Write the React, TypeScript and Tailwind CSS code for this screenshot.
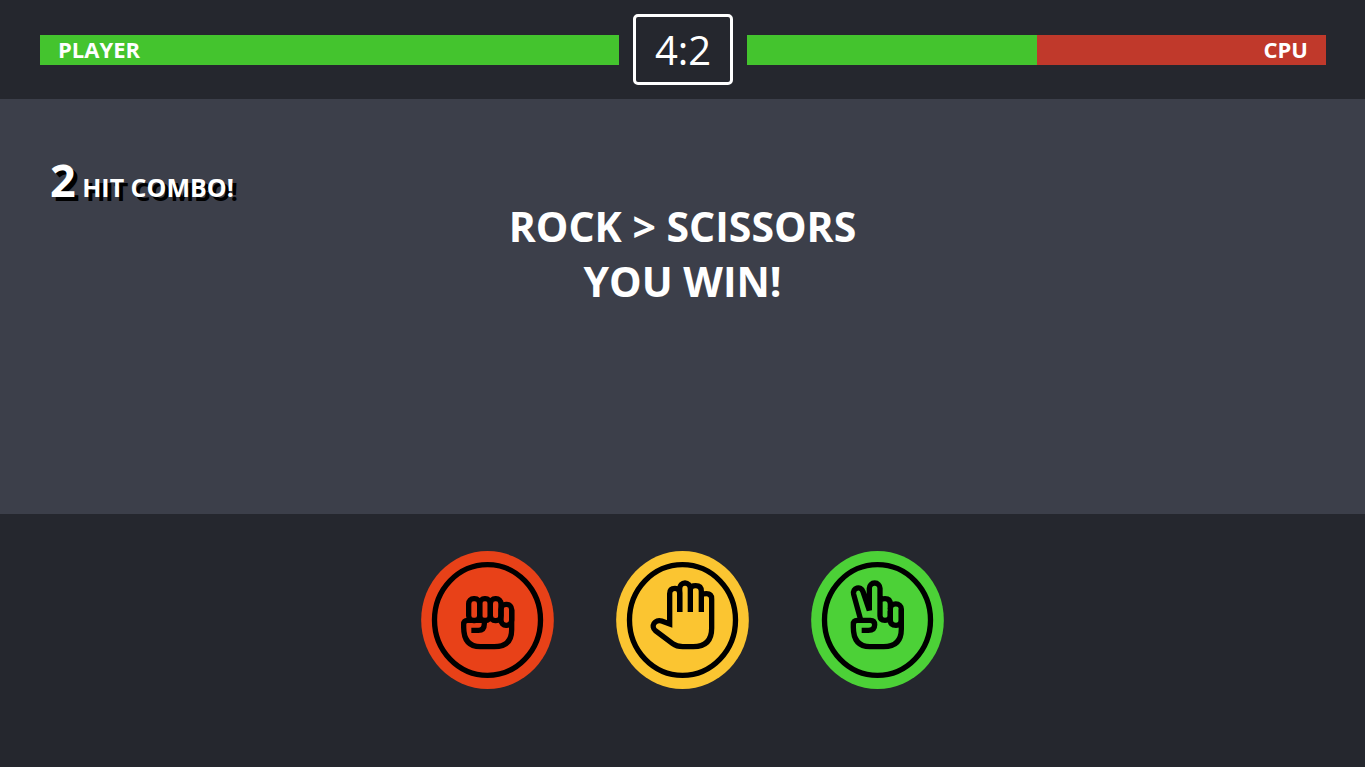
import type { ReactNode } from 'react';

type Move = { name: string; fill: string; icon: ReactNode };

const moves: Move[] = [
  {
    name: 'Rock',
    fill: 'fill-[#e84118]',
    icon: (
      <>
        <rect x="143" y="143" width="33" height="66" rx="15" />
        <rect x="176" y="143" width="32" height="66" rx="15" />
        <rect x="208" y="143" width="32" height="66" rx="15" />
        <rect x="240" y="160" width="32" height="63" rx="15" />
        <path d="M272 176V236q0 51-52 51H178q-50 0-50-58V220q0-12 12-12H190V218q0 20-18 20H151" />
      </>
    ),
  },
  {
    name: 'Paper',
    fill: 'fill-[#fbc531]',
    icon: (
      <>
        <path d="M191 183V126q0-14-14-14q-16 0-16 16V219L137 210c-20-7-35 16-18 30L170 278q12 9 30 9H232q55 0 55-55V144q0-16-16-16q-12 0-14 6" />
        <path d="M191 183V113a16 17 0 0 1 32 0V183M223 114q2-10 16-10q17 0 17 17V183" />
      </>
    ),
  },
  {
    name: 'Scissors',
    fill: 'fill-[#4cd137]',
    icon: (
      <>
        <path d="M148 203L128 130c-5-20 22-27 28-8L175 178V112a16 16 0 0 1 32 0V195q0 13 15 13q16 0 16-13V160q0-17-16-17q-10 0-15 6" />
        <path d="M238 174a16 15 0 0 1 33 0V207q0 16-16 16q-17 0-17-16V180" />
        <path d="M271 175V234q0 53-53 53H177q-50 0-50-58V220q0-12 12-12H178q13 0 13 13q0 17-19 17H152" />
      </>
    ),
  },
];

function MoveButton({ move }: { move: Move }) {
  return (
    <button type="button" aria-label={move.name} className="cursor-pointer rounded-full">
      <svg viewBox="0 0 399 414" className="h-[138px] w-[133px]" aria-hidden="true">
        <ellipse cx="199.5" cy="207" rx="199" ry="207" className={move.fill} />
        <g fill="none" stroke="#000" strokeWidth="16">
          <ellipse cx="199.5" cy="207" rx="159" ry="166" />
          {move.icon}
        </g>
      </svg>
    </button>
  );
}

function HealthBar({ label, health, alignEnd }: { label: string; health: number; alignEnd?: boolean }) {
  return (
    <div
      role="meter"
      aria-label={label}
      aria-valuenow={health}
      aria-valuemin={0}
      aria-valuemax={100}
      className="relative h-[30px] flex-1 bg-[#c0392b]"
    >
      <div className="h-full bg-[#44c42e]" style={{ width: `${health}%` }} />
      <span
        className={`absolute inset-0 flex items-center px-[18px] text-[22px] font-bold ${
          alignEnd ? 'justify-end' : 'justify-start'
        }`}
      >
        {label}
      </span>
    </div>
  );
}

export default function App() {
  return (
    <div className="flex min-h-screen flex-col bg-[#25272e] font-['Open_Sans',sans-serif] text-white">
      <header className="flex items-center gap-3.5 py-3.5 pr-[39px] pl-10">
        <HealthBar label="PLAYER" health={100} />
        <div className="rounded-[5px] border-3 border-white px-[19px] py-1 text-[40px] leading-[57px]">4:2</div>
        <HealthBar label="CPU" health={50} alignEnd />
      </header>

      <main className="relative flex grow flex-col items-center bg-[#3c3f4a] pt-[100px]">
        <p className="absolute top-[47px] left-[50px] text-[25px] leading-[68px] font-bold [text-shadow:4px_4px_0_#000]">
          <span className="text-[45px]">2</span> HIT COMBO!
        </p>
        <h1 className="text-center text-[41px] leading-[55px] font-bold">
          ROCK &gt; SCISSORS
          <br />
          YOU WIN!
        </h1>
      </main>

      <footer className="flex h-[253px] justify-center gap-[62px] pt-[37px]">
        {moves.map((move) => (
          <div key={move.name}>
            <MoveButton move={move} />
          </div>
        ))}
      </footer>
    </div>
  );
}
